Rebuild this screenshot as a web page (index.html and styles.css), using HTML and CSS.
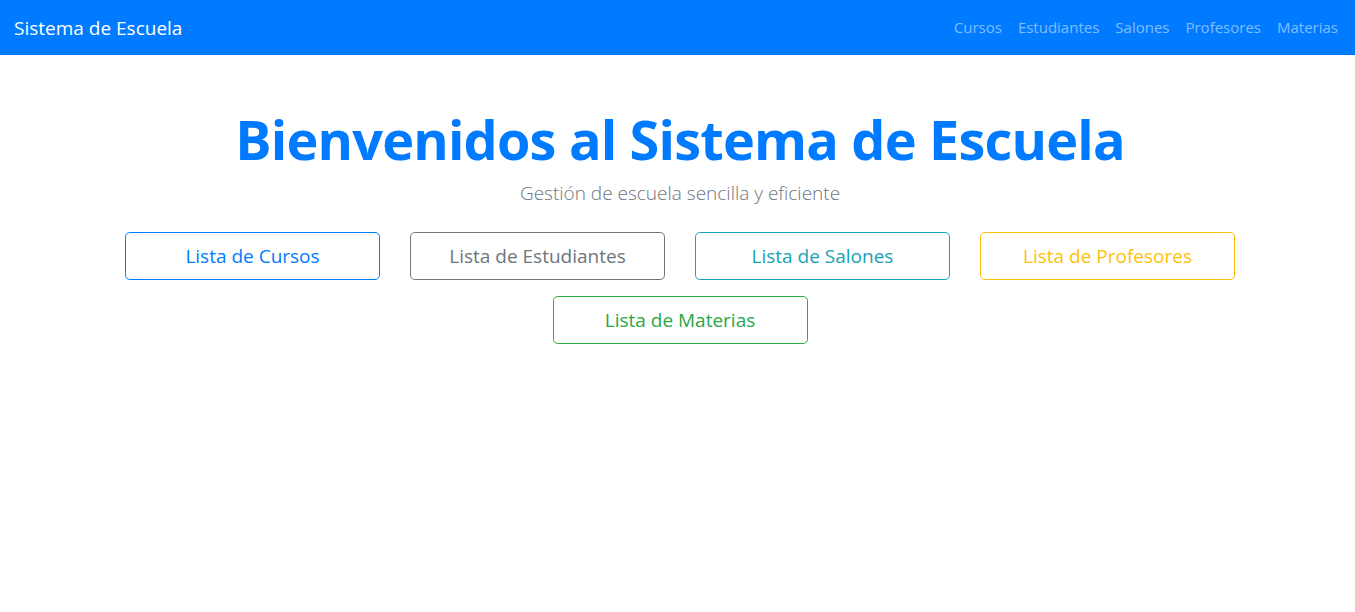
FILE: index.html
```html
<!DOCTYPE html>
<html lang="es">
<head>
<meta charset="utf-8">
<title>Sistema de Escuela</title>
<link rel="stylesheet" href="styles.css">
</head>
<body>
<nav class="navbar">
  <a class="brand" href="#">Sistema de Escuela</a>
  <ul class="nav">
    <li><a class="nav-link" href="#">Cursos</a></li>
    <li><a class="nav-link" href="#">Estudiantes</a></li>
    <li><a class="nav-link" href="#">Salones</a></li>
    <li><a class="nav-link" href="#">Profesores</a></li>
    <li><a class="nav-link" href="#">Materias</a></li>
  </ul>
</nav>
<main class="hero">
  <h1 class="title">Bienvenidos al Sistema de Escuela</h1>
  <p class="lead">Gestión de escuela sencilla y eficiente</p>
  <div class="actions">
    <a class="btn btn-primary" href="#">Lista de Cursos</a>
    <a class="btn btn-secondary" href="#">Lista de Estudiantes</a>
    <a class="btn btn-info" href="#">Lista de Salones</a>
    <a class="btn btn-warning" href="#">Lista de Profesores</a>
    <a class="btn btn-success" href="#">Lista de Materias</a>
  </div>
</main>
</body>
</html>
```
FILE: styles.css
```css
* { box-sizing: border-box; }
html, body { margin: 0; padding: 0; }
body {
  font-family: "Open Sans", "Noto Sans", sans-serif;
  font-size: 16px;
  line-height: 1.5;
  color: #212529;
  background: #fff;
}
a { text-decoration: none; }

.navbar {
  display: flex;
  align-items: center;
  justify-content: space-between;
  height: 55px;
  padding: 0 9px 0 14px;
  background: #007bff;
}
.brand {
  color: #fff;
  font-size: 19px;
  line-height: 30px;
}
.nav {
  display: flex;
  list-style: none;
  margin: 0;
  padding: 0;
}
.nav-link {
  display: block;
  padding: 8px 8px;
  color: rgba(255, 255, 255, 0.5);
  font-size: 15px;
}

.hero {
  display: flex;
  flex-direction: column;
  align-items: center;
  padding: 52px 0 0 5px;
}
.title {
  margin: 0;
  color: #007bff;
  font-size: 54px;
  font-weight: 700;
  line-height: 64px;
  letter-spacing: -0.8px;
}
.lead {
  margin: 8px 0 25px;
  color: #6c757d;
  font-size: 19px;
  font-weight: 300;
  line-height: 28px;
}
.actions {
  display: flex;
  flex-wrap: wrap;
  justify-content: center;
  gap: 16px 30px;
  width: 1110px;
}
.btn {
  display: block;
  width: 255px;
  height: 48px;
  padding: 8px 16px;
  border: 1px solid;
  border-radius: 4.8px;
  font-size: 19px;
  line-height: 30px;
  text-align: center;
}
.btn-primary { color: #007bff; border-color: #007bff; }
.btn-secondary { color: #6c757d; border-color: #6c757d; }
.btn-info { color: #17a2b8; border-color: #17a2b8; }
.btn-warning { color: #ffc107; border-color: #ffc107; }
.btn-success { color: #28a745; border-color: #28a745; }
```
